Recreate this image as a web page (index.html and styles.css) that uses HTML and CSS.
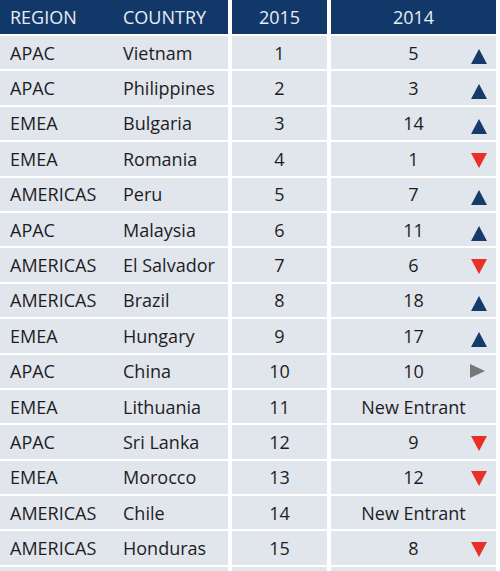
FILE: index.html
```html
<!DOCTYPE html>
<html lang="en">
<head>
    <meta charset="UTF-8">
    <meta name="viewport" content="width=device-width, initial-scale=1.0">
    <title>Ranking 2015</title>
    <link rel="stylesheet" href="styles.css">
</head>
<body>
    <div class="ranking">
        <div class="cell head place"><span class="region">REGION</span><span>COUNTRY</span></div>
        <div class="cell head year">2015</div>
        <div class="cell head year">2014</div>

        <div class="cell place"><span class="region">APAC</span><span>Vietnam</span></div>
        <div class="cell rank">1</div>
        <div class="cell prev"><span class="num">5</span><i class="arrow up"></i></div>

        <div class="cell place"><span class="region">APAC</span><span>Philippines</span></div>
        <div class="cell rank">2</div>
        <div class="cell prev"><span class="num">3</span><i class="arrow up"></i></div>

        <div class="cell place"><span class="region">EMEA</span><span>Bulgaria</span></div>
        <div class="cell rank">3</div>
        <div class="cell prev"><span class="num">14</span><i class="arrow up"></i></div>

        <div class="cell place"><span class="region">EMEA</span><span>Romania</span></div>
        <div class="cell rank">4</div>
        <div class="cell prev"><span class="num">1</span><i class="arrow down"></i></div>

        <div class="cell place"><span class="region">AMERICAS</span><span>Peru</span></div>
        <div class="cell rank">5</div>
        <div class="cell prev"><span class="num">7</span><i class="arrow up"></i></div>

        <div class="cell place"><span class="region">APAC</span><span>Malaysia</span></div>
        <div class="cell rank">6</div>
        <div class="cell prev"><span class="num">11</span><i class="arrow up"></i></div>

        <div class="cell place"><span class="region">AMERICAS</span><span>El Salvador</span></div>
        <div class="cell rank">7</div>
        <div class="cell prev"><span class="num">6</span><i class="arrow down"></i></div>

        <div class="cell place"><span class="region">AMERICAS</span><span>Brazil</span></div>
        <div class="cell rank">8</div>
        <div class="cell prev"><span class="num">18</span><i class="arrow up"></i></div>

        <div class="cell place"><span class="region">EMEA</span><span>Hungary</span></div>
        <div class="cell rank">9</div>
        <div class="cell prev"><span class="num">17</span><i class="arrow up"></i></div>

        <div class="cell place"><span class="region">APAC</span><span>China</span></div>
        <div class="cell rank">10</div>
        <div class="cell prev"><span class="num">10</span><i class="arrow same"></i></div>

        <div class="cell place"><span class="region">EMEA</span><span>Lithuania</span></div>
        <div class="cell rank">11</div>
        <div class="cell prev"><span class="num">New Entrant</span></div>

        <div class="cell place"><span class="region">APAC</span><span>Sri Lanka</span></div>
        <div class="cell rank">12</div>
        <div class="cell prev"><span class="num">9</span><i class="arrow down"></i></div>

        <div class="cell place"><span class="region">EMEA</span><span>Morocco</span></div>
        <div class="cell rank">13</div>
        <div class="cell prev"><span class="num">12</span><i class="arrow down"></i></div>

        <div class="cell place"><span class="region">AMERICAS</span><span>Chile</span></div>
        <div class="cell rank">14</div>
        <div class="cell prev"><span class="num">New Entrant</span></div>

        <div class="cell place"><span class="region">AMERICAS</span><span>Honduras</span></div>
        <div class="cell rank">15</div>
        <div class="cell prev"><span class="num">8</span><i class="arrow down"></i></div>

        <div class="cell place"></div>
        <div class="cell rank"></div>
        <div class="cell prev"></div>
    </div>
</body>
</html>
```

FILE: styles.css
```css
/* Global Styles */
body {
    font-family: 'Open Sans', 'Liberation Sans', sans-serif;
    margin: 0;
    padding: 0;
    background-color: #ffffff;
    color: #1d1d1f;
    font-size: 18px;
    overflow: hidden;
}

.ranking {
    display: grid;
    grid-template-columns: 228px 95px 165px;
    grid-template-rows: 34px;
    grid-auto-rows: 33.4px;
    column-gap: 4px;
    row-gap: 2px;
}

.cell {
    background: #e1e5ec; /* pale row */
    display: flex;
    align-items: center;
    line-height: 1;
}

.head {
    background: #12386a; /* navy header */
    color: #e9edf3;
}

.year,
.rank {
    justify-content: center;
}

.place {
    padding-left: 10px;
}

.region {
    width: 113px;
}

/* 2014 column: number centered, arrow at the right */
.prev {
    display: grid;
    grid-template-columns: 1fr auto 1fr;
    align-items: center;
    padding: 0 9px;
}

.prev .num {
    grid-column: 2;
}

.arrow {
    grid-column: 3;
    justify-self: end;
    width: 0;
    height: 0;
}

.arrow.up {
    border-left: 8.5px solid transparent;
    border-right: 8.5px solid transparent;
    border-bottom: 15px solid #163b6b;
    margin-top: 7px;
}

.arrow.down {
    border-left: 8.5px solid transparent;
    border-right: 8.5px solid transparent;
    border-top: 15px solid #ea2f27;
    margin-top: 3px;
}

.arrow.same {
    border-top: 7px solid transparent;
    border-bottom: 7px solid transparent;
    border-left: 15px solid #787878;
    margin-right: 2px;
}
```
